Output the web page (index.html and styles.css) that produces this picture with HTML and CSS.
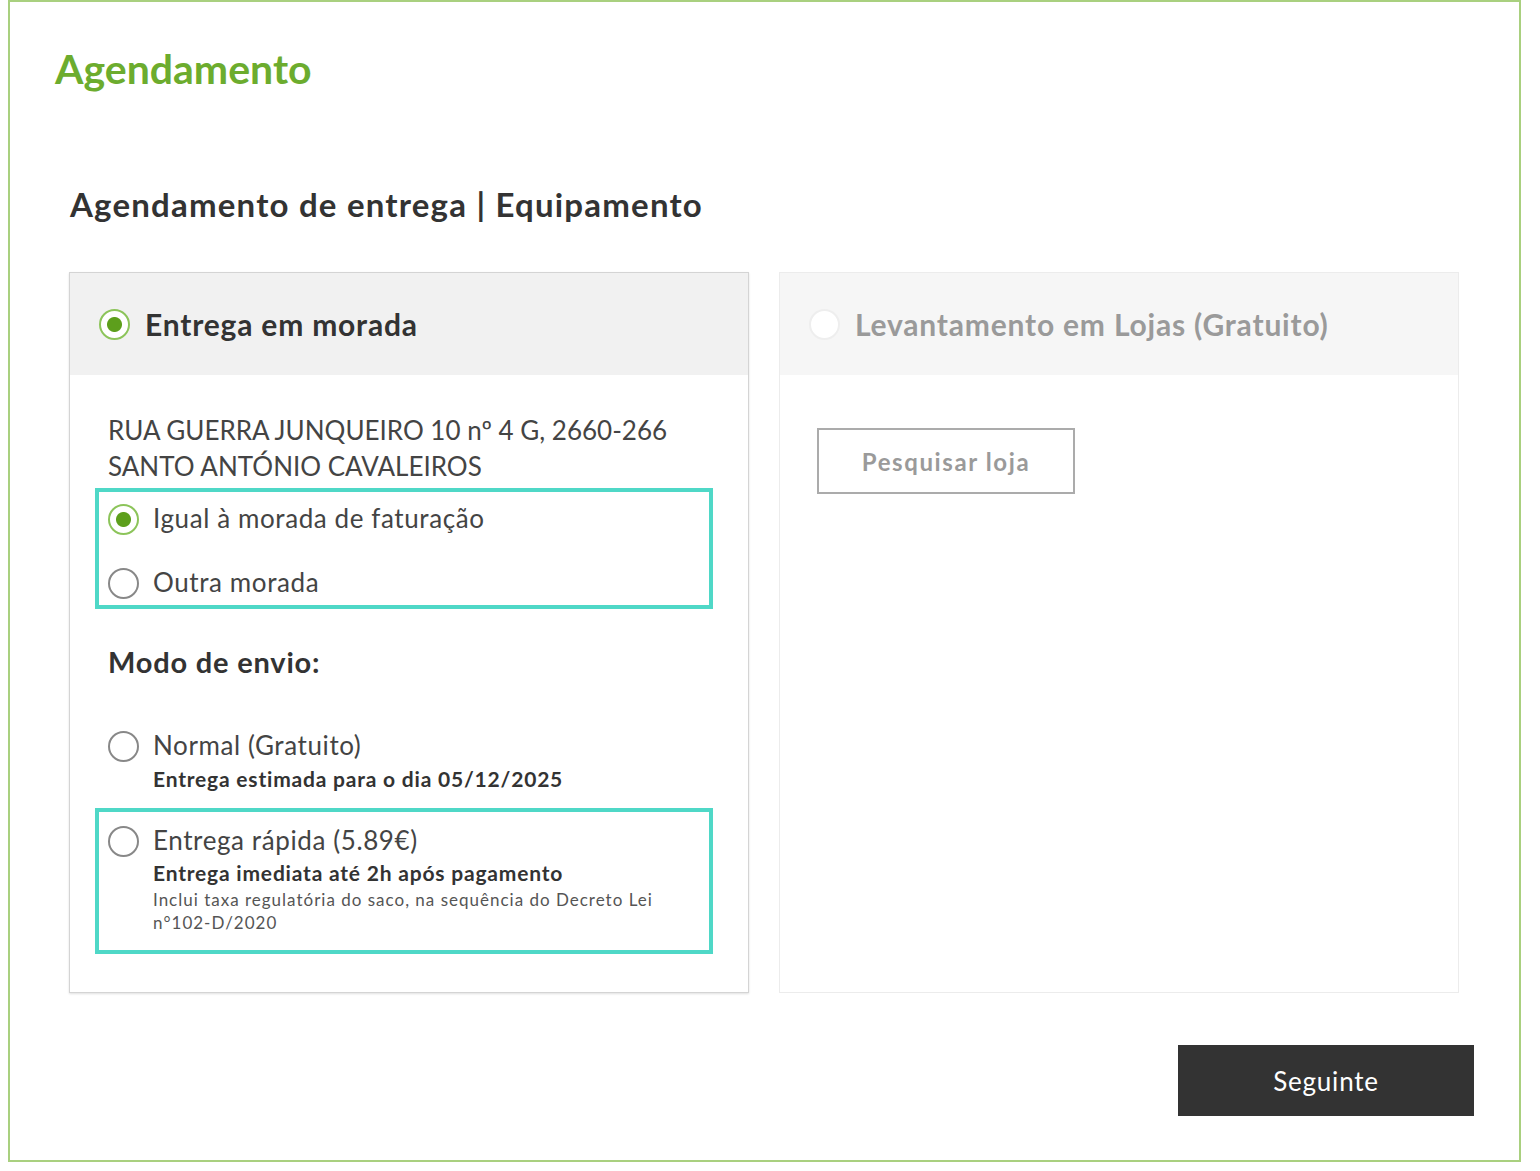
FILE: index.html
```html
<!DOCTYPE html>
<html lang="pt">
<head>
<meta charset="UTF-8">
<title>Agendamento</title>
<link rel="stylesheet" href="styles.css">
</head>
<body>

<div class="frame">
  <h1 class="page-title">Agendamento</h1>

  <h2 class="section-title">Agendamento de entrega | Equipamento</h2>

  <div class="cards">

    <div class="card">
      <div class="card-head">
        <span class="radio checked"></span>
        <span class="card-label">Entrega em morada</span>
      </div>
      <div class="card-body">
        <div class="address">
          RUA GUERRA JUNQUEIRO 10 nº 4 G, 2660-266<br>
          SANTO ANTÓNIO CAVALEIROS
        </div>

        <div class="highlight addr-choice">
          <div class="option">
            <span class="radio small checked"></span>
            <span class="opt-label">Igual à morada de faturação</span>
          </div>
          <div class="option">
            <span class="radio small"></span>
            <span class="opt-label">Outra morada</span>
          </div>
        </div>

        <div class="ship-title">Modo de envio:</div>

        <div class="option ship">
          <span class="radio small"></span>
          <div>
            <div class="opt-label">Normal (Gratuito)</div>
            <div class="opt-sub">Entrega estimada para o dia 05/12/2025</div>
          </div>
        </div>

        <div class="highlight fast">
          <div class="option ship">
            <span class="radio small"></span>
            <div>
              <div class="opt-label">Entrega rápida (5.89€)</div>
              <div class="opt-sub">Entrega imediata até 2h após pagamento</div>
              <div class="opt-note">Inclui taxa regulatória do saco, na sequência do Decreto Lei n°102-D/2020</div>
            </div>
          </div>
        </div>
      </div>
    </div>

    <div class="card off">
      <div class="card-head">
        <span class="radio blank"></span>
        <span class="card-label">Levantamento em Lojas (Gratuito)</span>
      </div>
      <div class="card-body">
        <button class="btn-outline">Pesquisar loja</button>
      </div>
    </div>

  </div>

  <div class="actions">
    <button class="btn-next">Seguinte</button>
  </div>
</div>

</body>
</html>
```

FILE: styles.css
```css
* { box-sizing: border-box; margin: 0; padding: 0; }
body { font-family: Lato, "Open Sans", Arial, sans-serif; color: #333; background: #fff; }

.frame { width: 1513px; height: 1162px; margin-left: 8px; border: 2px solid #a9d07f; padding: 0 60px 0 59px; }

.page-title { color: #6cac2e; font-size: 41px; font-weight: bold; line-height: 48px; margin: 43px 0 0 -14px; }
.section-title { font-size: 33px; font-weight: bold; letter-spacing: 1.2px; line-height: 40px; margin: 91px 0 0 1px; color: #333; }

.cards { display: grid; grid-template-columns: 680px 680px; gap: 30px; margin-top: 48px; }
.card { border: 1px solid #d4d4d4; box-shadow: 0 1px 2px rgba(0,0,0,0.12); height: 721px; background: #fff; }
.card.off { border-color: #ececec; box-shadow: none; }
.card-head { background: #f1f1f1; height: 102px; display: flex; align-items: center; padding-left: 29px; gap: 15px; }
.card.off .card-head { background: #f6f6f6; }
.card-label { font-size: 30px; font-weight: bold; letter-spacing: 0.8px; color: #333; }
.card.off .card-label { color: #9a9a9a; }
.card-body { padding: 37px 37px 0 38px; }

.radio { width: 31px; height: 31px; border-radius: 50%; border: 2px solid #888; background: #fff; flex: none; }
.radio.checked { border-color: #8cc45a; background: radial-gradient(circle, #5d9f1c 0 7px, #fff 8px); }
.radio.blank { border-color: #eeeeee; }

.address { font-size: 26px; line-height: 36px; color: #444; }

.highlight { border: 4px solid #4fd8c7; margin: 4px -2px 0 -13px; padding: 0 9px; }
.addr-choice { height: 121px; padding-top: 9px; }
.addr-choice .option + .option { margin-top: 30px; }

.option { display: flex; align-items: flex-start; gap: 14px; }
.opt-label { font-size: 26px; letter-spacing: 0.6px; line-height: 34px; color: #444; }
.opt-sub { font-size: 21px; font-weight: bold; letter-spacing: 0.8px; line-height: 30px; color: #333; margin-top: 2px; }
.opt-note { font-size: 17px; letter-spacing: 1px; line-height: 23px; color: #555; max-width: 530px; }
.option .radio { margin-top: 3px; }

.ship-title { font-size: 29px; font-weight: bold; letter-spacing: 0.8px; line-height: 36px; margin-top: 35px; }
.option.ship { margin-top: 48px; }
.fast { margin-top: 14px; height: 146px; }
.fast .option.ship { margin-top: 11px; }
.fast .opt-sub { margin-top: 1px; }

.btn-outline { margin-top: 16px; margin-left: -1px; width: 258px; height: 66px; border: 2px solid #ababab; background: #fff; color: #9a9a9a; font-family: Lato, sans-serif; font-size: 24px; font-weight: bold; letter-spacing: 1.6px; }

.actions { display: flex; justify-content: flex-end; margin: 52px -15px 0 0; }
.btn-next { width: 296px; height: 71px; background: #333; color: #fff; border: none; font-family: Lato, sans-serif; font-size: 26px; letter-spacing: 0.8px; }
```
